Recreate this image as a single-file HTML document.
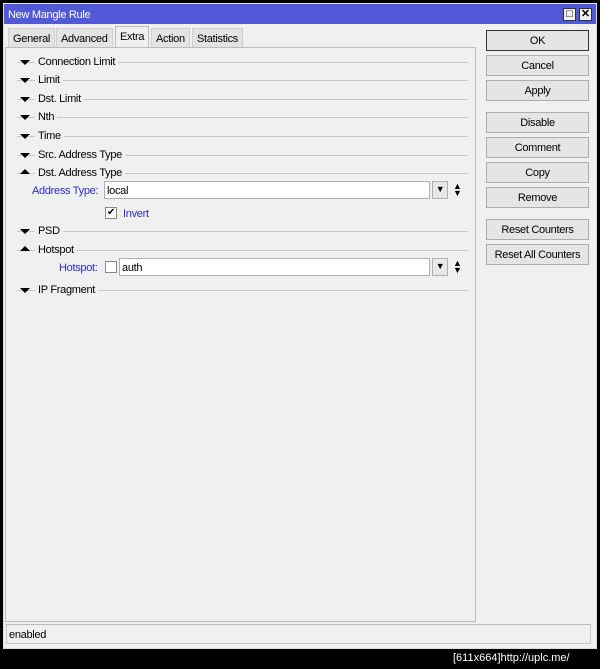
<!DOCTYPE html>
<html><head><style>
*{box-sizing:border-box;margin:0;padding:0}
body{width:600px;height:669px;background:#000;position:relative;overflow:hidden;font-family:"Liberation Sans",sans-serif;font-size:11px;letter-spacing:-0.3px;color:#000}
.a{position:absolute}
.win{left:3px;top:3px;width:594px;height:646px;background:#f0f0f0;border:1px solid #ddd}
.title{left:4px;top:4px;width:592px;height:20px;background:#5259d6;color:#fff;font-size:11px;padding:5px 0 0 4px}
.tb{top:8px;width:13px;height:13px;background:#f0f0f0;border:1px solid #333;font-size:11px;line-height:11px;text-align:center;font-weight:bold;letter-spacing:0}
.tab{top:28px;height:19px;background:#e3e3e3;border:1px solid #d0d0d0;border-bottom:none;padding:4px 4px 0}
.panel{left:5px;top:47px;width:471px;height:575px;border:1px solid #bcbcbc;background:#f0f0f0}
.row{left:17px;height:14px;width:451px}
.row .ln{position:absolute;left:0;right:0;top:7px;border-top:1px solid #c8c8c8}
.row span{position:absolute;top:1px;line-height:13px;background:#f0f0f0;padding:0 3px;left:18px}
.tri{position:absolute;left:3px;top:5px;width:0;height:0;border-left:5px solid transparent;border-right:5px solid transparent}
.dn{border-top:5px solid #000}
.up{border-bottom:5px solid #000;top:3px}
.btn{left:486px;width:103px;height:21px;border:1px solid #adadad;background:#e5e5e5;text-align:center;padding-top:4px}
.lbl{color:#2a2ad0}
.inp{height:18px;background:#fff;border:1px solid #b0b0b0;padding:3px 2px}
.dd{width:16px;height:18px;border:1px solid #b0b0b0;background:#e8e8e8;font-size:9px;text-align:center;line-height:15px}
</style></head><body>
<div class="a win"></div>
<div class="a title">New Mangle Rule</div>
<div class="a tb" style="left:563px">□</div>
<div class="a tb" style="left:579px">✕</div>
<div class="a tab" style="left:8px">General</div>
<div class="a tab" style="left:56px">Advanced</div>
<div class="a tab" style="left:115px;top:26px;height:22px;background:#f0f0f0;border-color:#bcbcbc">Extra</div>
<div class="a tab" style="left:151px">Action</div>
<div class="a tab" style="left:192px">Statistics</div>
<div class="a panel"></div>

<div class="a row" style="top:55px"><div class="ln"></div><i class="tri dn"></i><span>Connection Limit</span></div>
<div class="a row" style="top:73px"><div class="ln"></div><i class="tri dn"></i><span>Limit</span></div>
<div class="a row" style="top:92px"><div class="ln"></div><i class="tri dn"></i><span>Dst. Limit</span></div>
<div class="a row" style="top:110px"><div class="ln"></div><i class="tri dn"></i><span>Nth</span></div>
<div class="a row" style="top:129px"><div class="ln"></div><i class="tri dn"></i><span>Time</span></div>
<div class="a row" style="top:148px"><div class="ln"></div><i class="tri dn"></i><span>Src. Address Type</span></div>
<div class="a row" style="top:166px"><div class="ln"></div><i class="tri up"></i><span>Dst. Address Type</span></div>
<div class="a lbl" style="left:32px;top:185px">Address Type:</div>
<div class="a inp" style="left:104px;top:181px;width:326px">local</div>
<div class="a dd" style="left:432px;top:181px">▼</div>
<div class="a" style="left:453px;top:183px;font-size:9px;line-height:7px">▲<br>▼</div>
<div class="a" style="left:105px;top:207px;width:12px;height:12px;border:1px solid #888;background:#fff;font-size:10px;line-height:10px;text-align:center">✔</div>
<div class="a lbl" style="left:123px;top:208px">Invert</div>
<div class="a row" style="top:224px"><div class="ln"></div><i class="tri dn"></i><span>PSD</span></div>
<div class="a row" style="top:243px"><div class="ln"></div><i class="tri up"></i><span>Hotspot</span></div>
<div class="a lbl" style="left:59px;top:262px">Hotspot:</div>
<div class="a" style="left:105px;top:261px;width:12px;height:12px;border:1px solid #888;background:#fff"></div>
<div class="a inp" style="left:119px;top:258px;width:311px">auth</div>
<div class="a dd" style="left:432px;top:258px">▼</div>
<div class="a" style="left:453px;top:260px;font-size:9px;line-height:7px">▲<br>▼</div>
<div class="a row" style="top:283px"><div class="ln"></div><i class="tri dn"></i><span>IP Fragment</span></div>

<div class="a btn" style="top:30px;border-color:#333">OK</div>
<div class="a btn" style="top:55px">Cancel</div>
<div class="a btn" style="top:80px">Apply</div>
<div class="a btn" style="top:112px">Disable</div>
<div class="a btn" style="top:137px">Comment</div>
<div class="a btn" style="top:162px">Copy</div>
<div class="a btn" style="top:187px">Remove</div>
<div class="a btn" style="top:219px">Reset Counters</div>
<div class="a btn" style="top:244px">Reset All Counters</div>

<div class="a" style="left:6px;top:624px;width:585px;height:20px;border:1px solid #c8c8c8;border-top-color:#bbb;padding:4px 2px">enabled</div>
<div class="a" style="left:453px;top:652px;color:#fff;font-size:11px;letter-spacing:0">[611x664]http://uplc.me/</div>
</body></html>
